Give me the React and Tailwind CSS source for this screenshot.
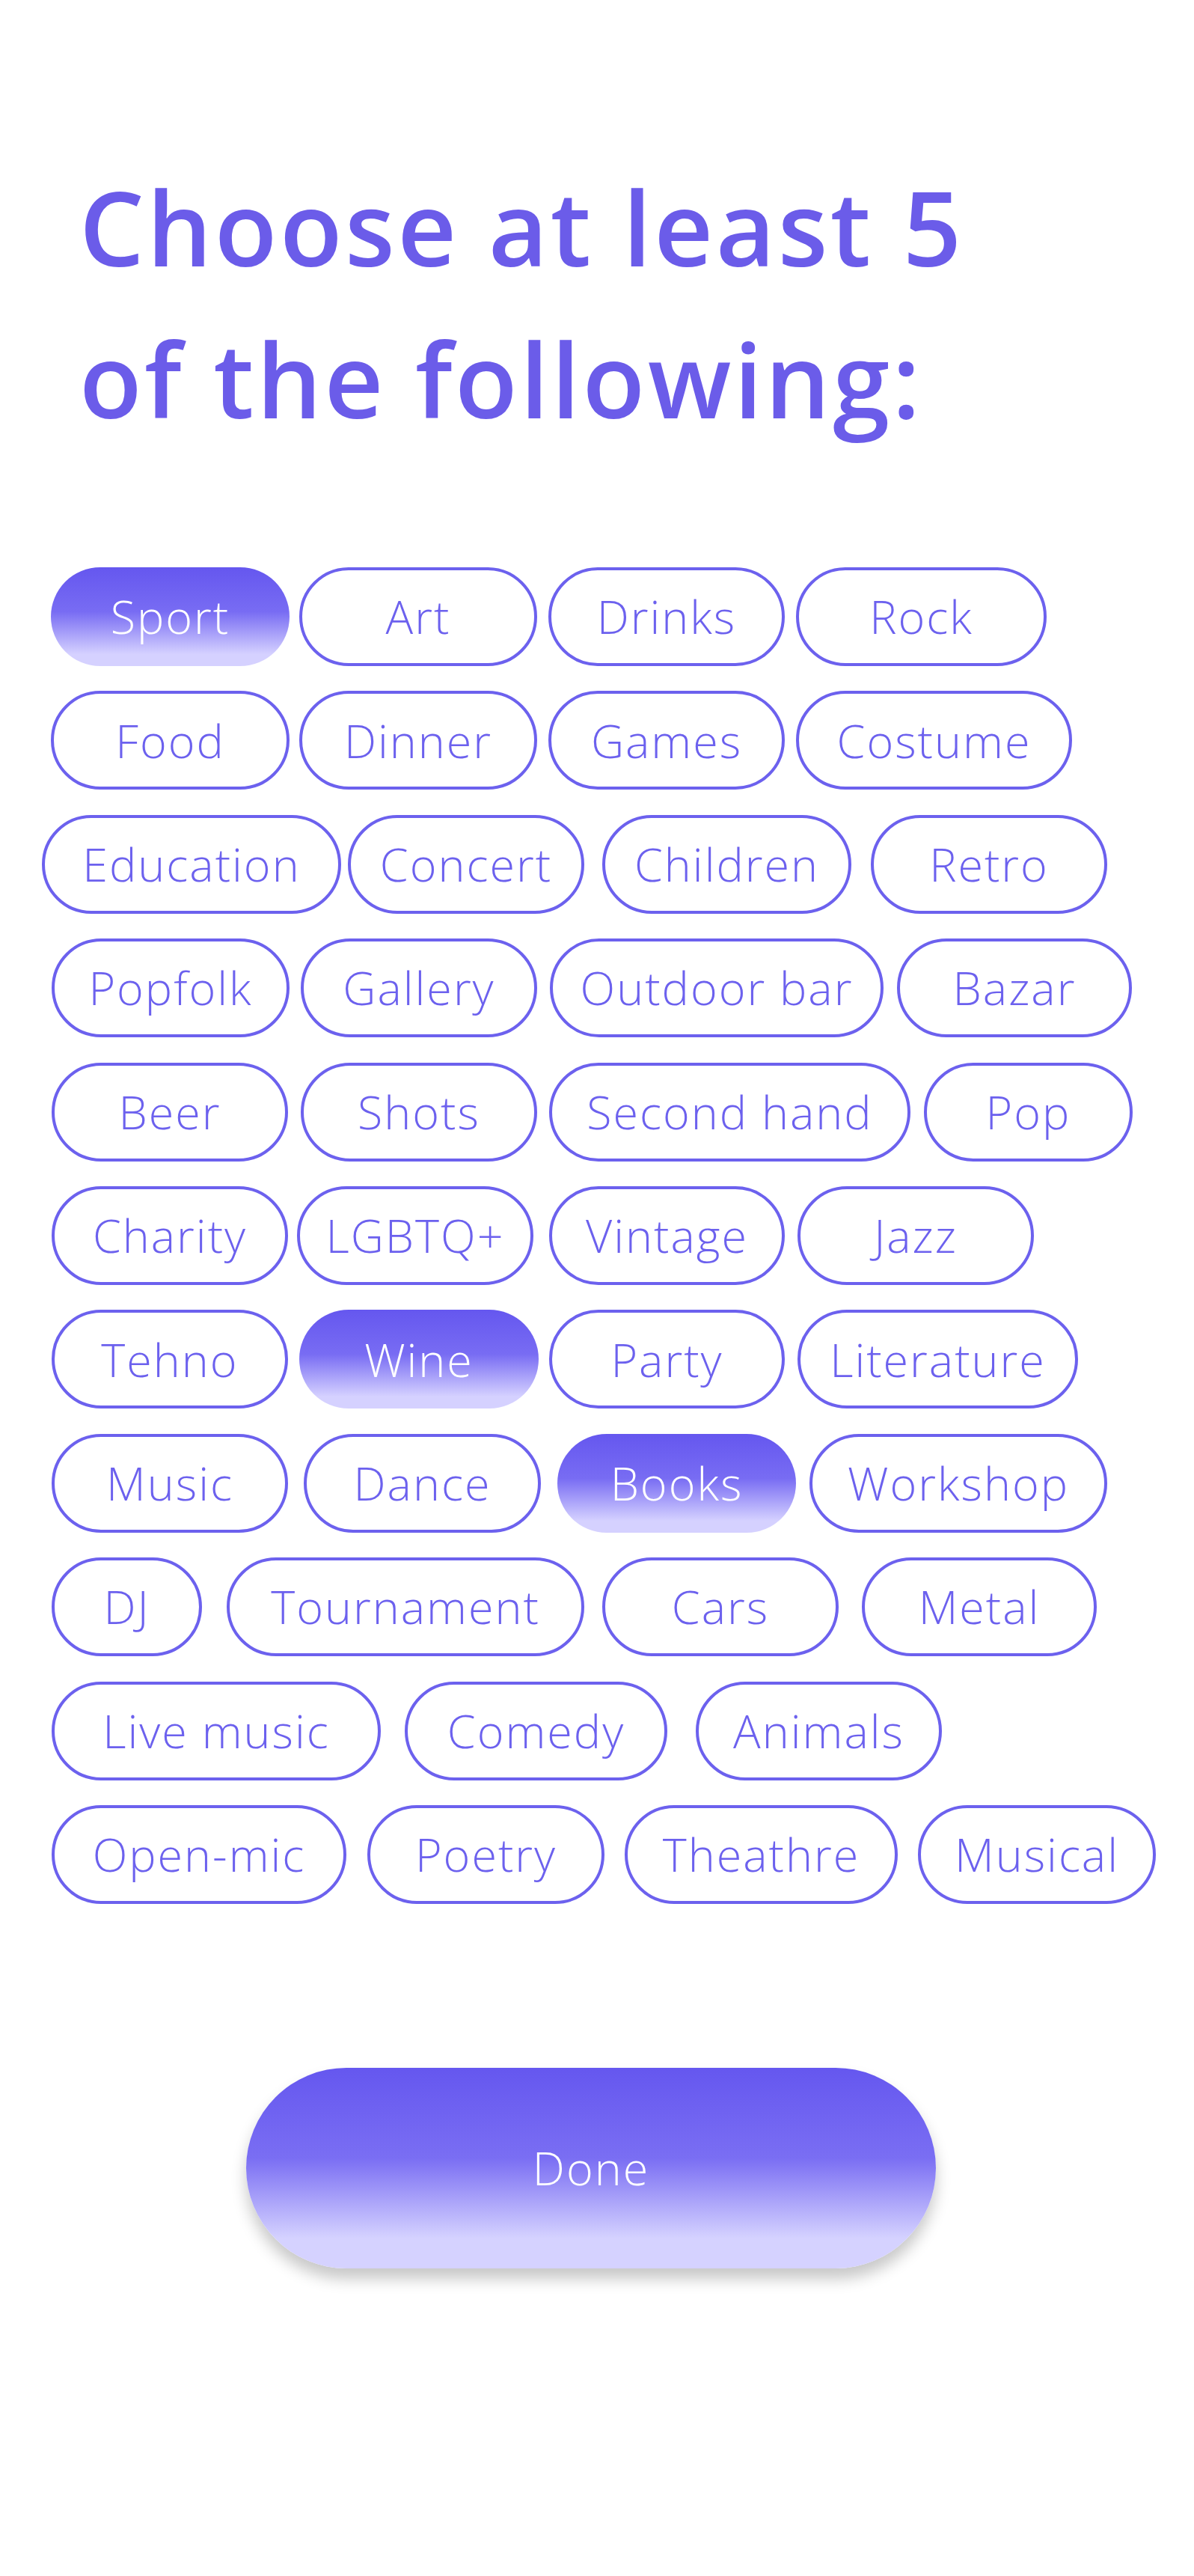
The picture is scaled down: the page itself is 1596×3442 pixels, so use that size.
import { useState } from "react";

const rows = [
  [
    { label: "Sport", cls: "ml-[68px] w-[319px]", on: true },
    { label: "Art", cls: "ml-[13px] w-[318px]" },
    { label: "Drinks", cls: "ml-[15px] w-[316px]" },
    { label: "Rock", cls: "ml-[15px] w-[335px]" },
  ],
  [
    { label: "Food", cls: "ml-[68px] w-[319px]" },
    { label: "Dinner", cls: "ml-[13px] w-[318px]" },
    { label: "Games", cls: "ml-[15px] w-[316px]" },
    { label: "Costume", cls: "ml-[15px] w-[369px]" },
  ],
  [
    { label: "Education", cls: "ml-[56px] w-[400px]" },
    { label: "Concert", cls: "ml-[9px] w-[316px]" },
    { label: "Children", cls: "ml-[24px] w-[333px]" },
    { label: "Retro", cls: "ml-[26px] w-[316px]" },
  ],
  [
    { label: "Popfolk", cls: "ml-[69px] w-[318px]" },
    { label: "Gallery", cls: "ml-[15px] w-[316px]" },
    { label: "Outdoor bar", cls: "ml-[17px] w-[446px]" },
    { label: "Bazar", cls: "ml-[18px] w-[314px]" },
  ],
  [
    { label: "Beer", cls: "ml-[69px] w-[316px]" },
    { label: "Shots", cls: "ml-[17px] w-[316px]" },
    { label: "Second hand", cls: "ml-[16px] w-[483px]" },
    { label: "Pop", cls: "ml-[18px] w-[279px]" },
  ],
  [
    { label: "Charity", cls: "ml-[69px] w-[316px]" },
    { label: "LGBTQ+", cls: "ml-[12px] w-[316px]" },
    { label: "Vintage", cls: "ml-[21px] w-[315px]" },
    { label: "Jazz", cls: "ml-[17px] w-[316px]" },
  ],
  [
    { label: "Tehno", cls: "ml-[69px] w-[316px]" },
    { label: "Wine", cls: "ml-[15px] w-[320px]", on: true },
    { label: "Party", cls: "ml-[14px] w-[315px]" },
    { label: "Literature", cls: "ml-[17px] w-[375px]" },
  ],
  [
    { label: "Music", cls: "ml-[69px] w-[316px]" },
    { label: "Dance", cls: "ml-[21px] w-[317px]" },
    { label: "Books", cls: "ml-[22px] w-[319px]", on: true },
    { label: "Workshop", cls: "ml-[18px] w-[398px]" },
  ],
  [
    { label: "DJ", cls: "ml-[69px] w-[201px]" },
    { label: "Tournament", cls: "ml-[33px] w-[478px]" },
    { label: "Cars", cls: "ml-[24px] w-[316px]" },
    { label: "Metal", cls: "ml-[31px] w-[314px]" },
  ],
  [
    { label: "Live music", cls: "ml-[69px] w-[440px]" },
    { label: "Comedy", cls: "ml-[32px] w-[351px]" },
    { label: "Animals", cls: "ml-[38px] w-[329px]" },
  ],
  [
    { label: "Open-mic", cls: "ml-[69px] w-[394px]" },
    { label: "Poetry", cls: "ml-[28px] w-[317px]" },
    { label: "Theathre", cls: "ml-[27px] w-[365px]" },
    { label: "Musical", cls: "ml-[27px] w-[318px]" },
  ],
];

function Chip({ label, cls, on, onToggle }) {
  return (
    <button
      onClick={onToggle}
      className={
        cls +
        " h-[132px] shrink-0 rounded-full flex items-center justify-center text-[61px] tracking-[2px] font-light whitespace-nowrap " +
        (on
          ? "bg-[linear-gradient(180deg,#6557ef_0%,#786cf3_45%,#d5d1ff_88%)] text-white"
          : "border-[4px] border-[#6c61ee] text-[#6c61ee] bg-white")
      }
    >
      {label}
    </button>
  );
}

export default function App() {
  const [picked, setPicked] = useState(["Sport", "Wine", "Books"]);

  const toggle = (label) => {
    setPicked((p) =>
      p.includes(label) ? p.filter((x) => x !== label) : [...p, label]
    );
  };

  return (
    <div className="w-[1596px] min-h-[3442px] bg-white font-['Open_Sans',sans-serif] overflow-hidden">
      <h1 className="pl-[106px] pt-[202px] text-[137px] leading-[203px] font-semibold text-[#6b5ce9] tracking-[3.5px]">
        Choose at least 5
        <br />
        of the following:
      </h1>

      {/* Chips */}
      <div className="mt-[150px] flex flex-col gap-[33.4px]">
        {rows.map((row, i) => (
          <div key={i} className="flex">
            {row.map((c) => (
              <Chip
                key={c.label}
                label={c.label}
                cls={c.cls}
                on={picked.includes(c.label)}
                onToggle={() => toggle(c.label)}
              />
            ))}
          </div>
        ))}
      </div>

      <button className="ml-[329px] mt-[219px] w-[922px] h-[268px] rounded-full bg-[linear-gradient(180deg,#6557ef_0%,#7a6ef3_45%,#d5d2ff_85%)] text-white text-[61px] tracking-[2px] font-light shadow-[0_14px_20px_rgba(0,0,0,0.22)]">
        Done
      </button>
    </div>
  );
}
